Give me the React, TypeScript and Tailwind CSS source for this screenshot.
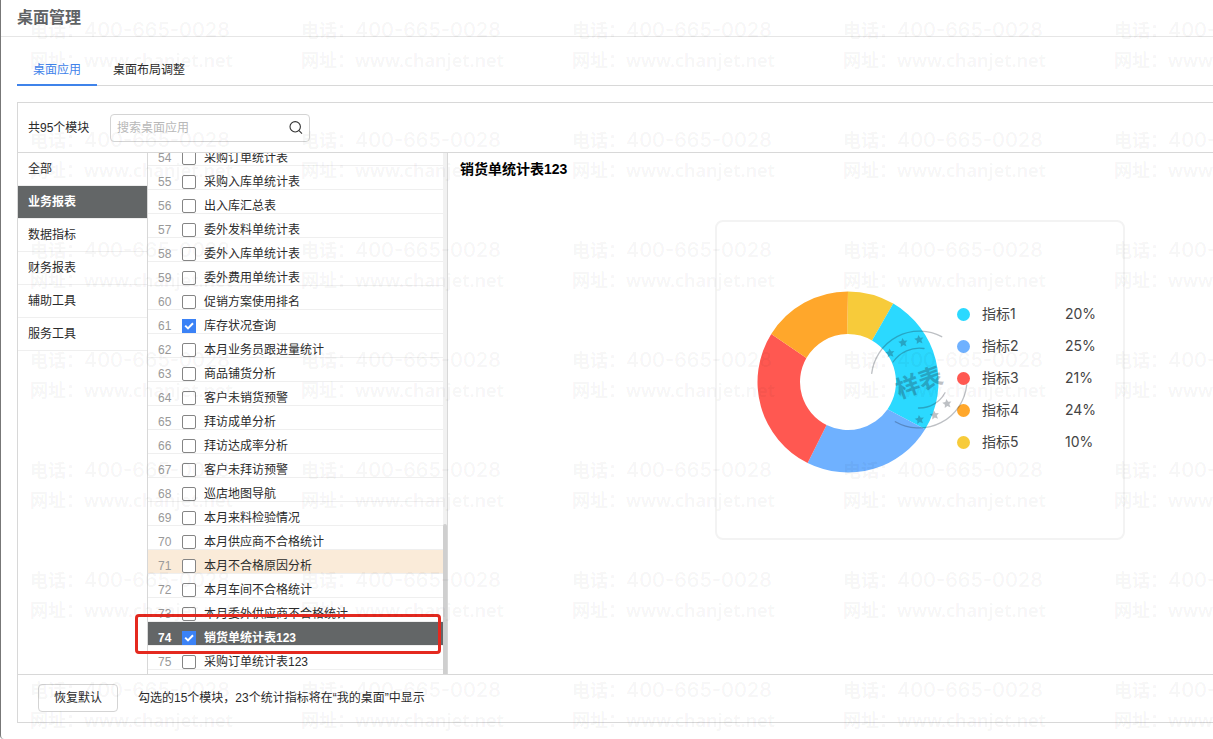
import React, { useState } from "react";

const categories = ["全部", "业务报表", "数据指标", "财务报表", "辅助工具", "服务工具"];

const modules = [
  { id: 54, name: "采购订单统计表" },
  { id: 55, name: "采购入库单统计表" },
  { id: 56, name: "出入库汇总表" },
  { id: 57, name: "委外发料单统计表" },
  { id: 58, name: "委外入库单统计表" },
  { id: 59, name: "委外费用单统计表" },
  { id: 60, name: "促销方案使用排名" },
  { id: 61, name: "库存状况查询" },
  { id: 62, name: "本月业务员跟进量统计" },
  { id: 63, name: "商品铺货分析" },
  { id: 64, name: "客户未销货预警" },
  { id: 65, name: "拜访成单分析" },
  { id: 66, name: "拜访达成率分析" },
  { id: 67, name: "客户未拜访预警" },
  { id: 68, name: "巡店地图导航" },
  { id: 69, name: "本月来料检验情况" },
  { id: 70, name: "本月供应商不合格统计" },
  { id: 71, name: "本月不合格原因分析" },
  { id: 72, name: "本月车间不合格统计" },
  { id: 73, name: "本月委外供应商不合格统计" },
  { id: 74, name: "销货单统计表123" },
  { id: 75, name: "采购订单统计表123" }
];

const legend = [
  { name: "指标1", value: "20%", dot: "bg-[#2bd9ff]" },
  { name: "指标2", value: "25%", dot: "bg-[#6fb1ff]" },
  { name: "指标3", value: "21%", dot: "bg-[#ff5851]" },
  { name: "指标4", value: "24%", dot: "bg-[#ffa72b]" },
  { name: "指标5", value: "10%", dot: "bg-[#f7cb3a]" }
];

// start / end angles in degrees, clockwise from the top: [outer, inner]
const slices = [
  { from: [0, -1], to: [30, 30], color: "#f7cb3a" },
  { from: [30, 30], to: [121.5, 124.5], color: "#2bd9ff" },
  { from: [121.5, 124.5], to: [206.5, 206.5], color: "#6fb1ff" },
  { from: [206.5, 206.5], to: [302, 300], color: "#ff5851" },
  { from: [302, 300], to: [360, 359], color: "#ffa72b" }
];

const stars = [
  [162, 48.5],
  [146, 51.5],
  [133, 62],
  [190, 112.5],
  [177.5, 124],
  [162.5, 128.5]
];

function point(angle: number, r: number) {
  const rad = (angle * Math.PI) / 180;
  return `${91 + r * Math.sin(rad)} ${91 - r * Math.cos(rad)}`;
}

function slicePath(from: number[], to: number[]) {
  return `M${point(from[0], 90.5)} A90.5 90.5 0 0 1 ${point(to[0], 90.5)} L${point(to[1], 48)} A48 48 0 0 0 ${point(from[1], 48)}Z`;
}

function Donut() {
  return (
    <svg width="182" height="182" viewBox="0 0 182 182" className="relative z-10 shrink-0 overflow-visible">
      {slices.map((s) => (
        <path key={s.color} d={slicePath(s.from, s.to)} fill={s.color} />
      ))}

      {/* Sample stamp */}
      <g opacity="0.29">
        <g fill="none" stroke="#1f2937" strokeWidth="1.3" strokeLinecap="round">
          <path d="M114.7 82.3A48 48 0 0 1 184.7 45.7" />
          <path d="M138.3 130.7A48 48 0 0 0 209.7 94" />
          <path d="M136 71A32 32 0 0 1 167 57.5" />
          <path d="M161.5 117A29 29 0 0 0 188 101.7" />
        </g>
        {stars.map(([x, y]) => (
          <path
            key={x}
            transform={`translate(${x} ${y}) rotate(-8)`}
            d="M0-4.6 1.4-1.6 4.6-1.3 2.2 .9 2.9 4.2 0 2.5-2.9 4.2-2.2 .9-4.6-1.3-1.4-1.6Z"
            fill="#1f2937"
          />
        ))}
        <text
          x="162"
          y="100"
          textAnchor="middle"
          transform="rotate(-20 162 91)"
          fill="#1f2937"
          className="text-2xl font-bold"
        >
          样表
        </text>
      </g>
    </svg>
  );
}

function Watermark() {
  return (
    <div
      aria-hidden="true"
      className="pointer-events-none absolute inset-0 z-30 overflow-hidden font-['Noto_Sans','Noto_Sans_CJK_SC',sans-serif] text-[18px] leading-[30px] font-semibold text-black/5 select-none"
    >
      {[0, 1, 2, 3, 4, 5, 6].map((row) => (
        <div key={row} className="flex h-[110px] w-max pt-[15px] pl-[29px]">
          {[0, 1, 2, 3, 4].map((col) => (
            <div key={col} className="w-[271px] whitespace-nowrap">
              <p className="flex">
                <span className="w-[54px]">电话：</span>
                <span className="font-[Inter,sans-serif] text-[20px] font-medium">400-665-0028</span>
              </p>
              <p className="flex">
                <span className="w-[54px]">网址：</span>
                <span>www.chanjet.net</span>
              </p>
            </div>
          ))}
        </div>
      ))}
    </div>
  );
}

export default function App() {
  const [category, setCategory] = useState("业务报表");
  const [checked, setChecked] = useState<number[]>([61, 74]);

  const toggle = (id: number) => {
    setChecked((list) => (list.includes(id) ? list.filter((n) => n !== id) : [...list, id]));
  };

  return (
    <div className="relative flex h-screen flex-col overflow-hidden rounded-bl border-l border-[#777] bg-white font-['Liberation_Sans','Noto_Sans_CJK_SC',sans-serif] text-xs text-[#2b2b2b]">
      <header className="flex h-[37px] shrink-0 items-center border-b border-[#e6e6e6] pl-4">
        <h1 className="text-base font-bold text-[#606365]">桌面管理</h1>
      </header>

      {/* Tabs */}
      <nav className="mt-4 ml-4 flex h-[33px] shrink-0 border-b border-[#d8d8d8]">
        <button className="-mb-px w-20 border-b-2 border-[#3f83ea] pt-0.5 text-[#3f83ea]">桌面应用</button>
        <button className="px-4 pt-0.5">桌面布局调整</button>
      </nav>

      <main className="mt-4 mb-4 ml-4 flex min-h-0 flex-1 flex-col border-y border-l border-[#d8d8d8]">
        <div className="flex h-[50px] shrink-0 items-center border-b border-[#d8d8d8] pl-2.5">
          <label htmlFor="module-search" className="w-[82px]">共95个模块</label>
          <div className="flex h-7 w-[200px] items-center rounded border border-[#d4d4d4] px-1.5">
            <input
              id="module-search"
              type="text"
              placeholder="搜索桌面应用"
              className="min-w-0 flex-1 outline-none placeholder:text-[#b8b8b8]"
            />
            <button aria-label="搜索">
              <svg width="14" height="14" viewBox="0 0 14 14" fill="none" stroke="#333" strokeWidth="1.1">
                <circle cx="6.2" cy="5.8" r="5.2" />
                <path d="M10 9.6l3 3" />
              </svg>
            </button>
          </div>
        </div>

        <div className="relative flex min-h-0 flex-1">
          {/* Categories */}
          <aside className="w-[130px] shrink-0 border-r border-[#d8d8d8]">
            {categories.map((name) => (
              <button
                key={name}
                onClick={() => setCategory(name)}
                className={`block h-[33px] w-full border-b border-[#efefef] pl-2.5 text-left ${
                  name === category ? "bg-[#636667] bg-clip-padding font-bold text-white" : ""
                }`}
              >
                {name}
              </button>
            ))}
          </aside>

          {/* Module list, scrolled to the end */}
          <div className="flex w-[300px] shrink-0 border-r border-[#d8d8d8]">
            <ul className="flex min-w-0 flex-1 flex-col justify-end overflow-hidden pb-1">
              {modules.map((m) => {
                const active = m.id === 74;
                return (
                  <li
                    key={m.id}
                    className={`h-6 shrink-0 border-b border-[#efefef] ${
                      active ? "bg-[#636667] font-bold text-white" : m.id === 71 ? "bg-[#faebd9]" : ""
                    }`}
                  >
                    <label className="flex h-full items-center pt-2 pl-2.5">
                      <span className={`w-6 leading-4 ${active ? "" : "text-[#999]"}`}>{m.id}</span>
                      <span className="grid size-3.5 place-items-center">
                        <input
                          type="checkbox"
                          checked={checked.includes(m.id)}
                          onChange={() => toggle(m.id)}
                          className="peer col-start-1 row-start-1 size-3.5 appearance-none rounded-xs border border-[#858585] bg-white checked:rounded-none checked:border-[#3b82f6] checked:bg-[#3b82f6]"
                        />
                        <svg
                          viewBox="0 0 14 14"
                          className="pointer-events-none invisible col-start-1 row-start-1 size-3.5 peer-checked:visible"
                          fill="none"
                          stroke="#fff"
                          strokeWidth="2"
                        >
                          <path d="M3.2 6.6l2.8 2.8 5-5.2" />
                        </svg>
                      </span>
                      <span className="ml-2 leading-4">{m.name}</span>
                    </label>
                  </li>
                );
              })}
            </ul>
            <div className="flex w-1 flex-col justify-end bg-[#f1f1f1]">
              <div className="h-[150px] rounded-t-xs bg-[#cfcfcf]" />
            </div>
          </div>

          {/* Preview */}
          <section className="min-w-0 flex-1 overflow-hidden">
            <h2 className="pt-1.5 pl-3 text-sm font-bold text-black">销货单统计表123</h2>
            <div className="mt-[41px] ml-[267px] flex h-80 w-[410px] items-center rounded-lg border-2 border-[#f3f3f3] pt-1 pl-10">
              <Donut />
              <ul className="-mt-2 ml-[18px] font-[Inter,'Noto_Sans_CJK_SC',sans-serif] text-sm text-[#444]">
                {legend.map((item) => (
                  <li key={item.name} className="flex h-8 items-center">
                    <span className={`size-[13px] rounded-full ${item.dot}`} />
                    <span className="ml-3 w-[83px]">{item.name}</span>
                    <span>{item.value}</span>
                  </li>
                ))}
              </ul>
            </div>
          </section>

          <div className="pointer-events-none absolute bottom-5 left-[117px] z-20 h-10 w-[306px] rounded border-3 border-[#e4291f]" />
        </div>

        <footer className="flex h-12 shrink-0 items-center border-t border-[#d8d8d8] pb-0.5 pl-5">
          <button className="h-7 w-20 rounded border border-[#d4d4d4]">恢复默认</button>
          <p className="ml-5">勾选的15个模块，23个统计指标将在“我的桌面”中显示</p>
        </footer>
      </main>

      <Watermark />
    </div>
  );
}
